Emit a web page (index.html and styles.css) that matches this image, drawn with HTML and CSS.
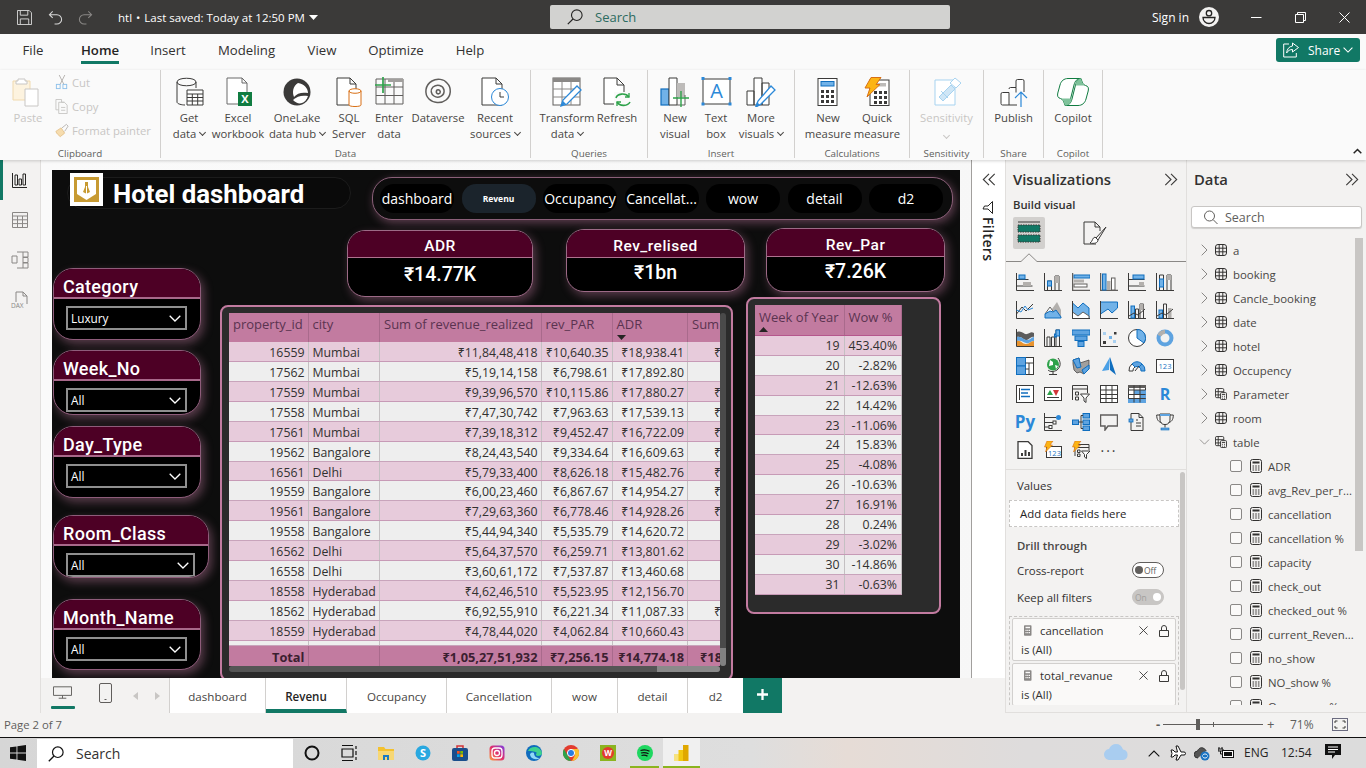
FILE: index.html
```html
<!DOCTYPE html>
<html lang="en">
<head>
<meta charset="utf-8">
<title>htl - Power BI Desktop</title>
<link rel="stylesheet" href="styles.css">
</head>
<body>
<svg class="defs" width="0" height="0">
  <symbol id="tb" viewBox="0 0 12 12"><rect x=".5" y=".5" width="11" height="11" rx="2.5" fill="none" stroke="#323130"/><path d="M4.2.5v11M7.8.5v11M.5 4.2h11M.5 7.8h11" stroke="#323130" fill="none"/></symbol>
  <symbol id="tc" viewBox="0 0 13 13"><rect x=".5" y=".5" width="9" height="10" rx="1.5" fill="none" stroke="#323130"/><path d="M3.5.5v10M.5 4h9M.5 7.5h9" stroke="#323130" fill="none"/><rect x="6" y="5" width="6.5" height="7.5" rx="1" fill="#f3f2f1" stroke="#323130"/><path d="M7.5 7h3.5M7.5 9h1M9.8 9h1M7.5 11h1M9.8 11h1" stroke="#323130"/></symbol>
  <symbol id="cl" viewBox="0 0 12 14"><rect x=".5" y=".5" width="11" height="13" rx="2" fill="none" stroke="#323130"/><rect x="2.5" y="2.5" width="7" height="2" fill="#323130"/><path d="M2.5 7h1.6M5.2 7h1.6M7.9 7h1.6M2.5 9h1.6M5.2 9h1.6M7.9 9h1.6M2.5 11h1.6M5.2 11h1.6M7.9 11h1.6" stroke="#323130" stroke-width="1.1"/></symbol>
  <symbol id="cv" viewBox="0 0 12 7"><path d="M.7.7 6 6l5.3-5.3" fill="none" stroke="#fff" stroke-width="1.3"/></symbol>
  <symbol id="dbl" viewBox="0 0 14 13"><path d="M7 .8 1.3 6.5 7 12.2M12.7.8 7 6.5l5.7 5.7" fill="none" stroke="#3b3a39" stroke-width="1.1"/></symbol>
  <symbol id="dbr" viewBox="0 0 14 13"><path d="M1.3.8 7 6.5 1.3 12.2M7 .8l5.7 5.7L7 12.2" fill="none" stroke="#3b3a39" stroke-width="1.1"/></symbol>
  <symbol id="ar" viewBox="0 0 7 12"><path d="M.7.7 6 6 .7 11.3" fill="none" stroke="#8a8886"/></symbol>
</svg>

<div class="app">
<header class="titlebar">
  <div class="tb-left">
    <svg class="ic15" viewBox="0 0 16 16"><path d="M.5.5h12.5l2.5 2.5v12.5H.5z M3.5.5v5h8v-5 M3.5 15.5v-6h9v6" fill="none" stroke="#d8d8d8"/></svg>
    <svg class="ic15" viewBox="0 0 16 16"><path d="M5 1.5 1.5 5 5 8.5M1.5 5h8a5 5 0 0 1 0 10H7" fill="none" stroke="#d8d8d8" stroke-width="1.1"/></svg>
    <svg class="ic15 dim" viewBox="0 0 16 16"><path d="M11 1.5 14.5 5 11 8.5M14.5 5h-8a5 5 0 0 0 0 10H9" fill="none" stroke="#8a8886" stroke-width="1.1"/></svg>
    <span class="doc-title">htl <b class="dot">•</b> Last saved: Today at 12:50 PM</span>
    <svg class="caret" viewBox="0 0 9 5"><path d="M0 0h9L4.5 5z" fill="#fff"/></svg>
  </div>
  <div class="global-search">
    <svg class="ic16" viewBox="0 0 16 16"><circle cx="9.8" cy="6.2" r="5.3" fill="none" stroke="#252423" stroke-width="1.1"/><path d="M6 10 .8 15.2" stroke="#252423" stroke-width="1.2"/></svg>
    <span>Search</span>
  </div>
  <div class="tb-right">
    <span class="signin">Sign in</span>
    <svg class="avatar" viewBox="0 0 20 20"><circle cx="10" cy="10" r="10" fill="#f3f2f1"/><circle cx="10" cy="6.2" r="2.7" fill="none" stroke="#252423" stroke-width="1.3"/><path d="M4 10.5h12a6 6 0 0 1-12 0z" fill="none" stroke="#252423" stroke-width="1.3"/></svg>
    <svg class="win-btn first" viewBox="0 0 11 11"><path d="M0 5.5h10.5" stroke="#fff"/></svg>
    <svg class="win-btn" viewBox="0 0 11 11"><path d="M.5 2.5h8v8h-8zM2.5 2.5V.5h8v8h-2" fill="none" stroke="#fff"/></svg>
    <svg class="win-btn" viewBox="0 0 11 11"><path d="M.5.5l10 10M10.5.5l-10 10" stroke="#fff"/></svg>
  </div>
</header>

<nav class="menu">
  <span>File</span><span class="active">Home</span><span>Insert</span><span>Modeling</span><span>View</span><span>Optimize</span><span>Help</span>
  <div class="share">
    <svg class="ic16" viewBox="0 0 16 16"><path d="M6 2H.7v13h12.6v-4" fill="none" stroke="#fff"/><path d="M9.5 1l6 4.5-6 4.5V7.5C7 7.5 5 8.6 3.6 11c.4-4 2.500-6.500 5.900-7z" fill="none" stroke="#fff"/></svg>
    <span>Share</span>
    <svg class="cv10" viewBox="0 0 12 7"><use href="#cv"/></svg>
  </div>
</nav>

<section class="ribbon">
  <div class="grp g-clip">
    <div class="clip-body">
      <div class="paste">
        <svg class="ic30" viewBox="0 0 30 30"><path d="M2 4h17v19H2z" fill="#fdf3df" stroke="#f0d9ae"/><path d="M7 4V2h7v2h2v3H5V4z" fill="#fff" stroke="#c8c6c4"/><path d="M14 12h13v17H14z" fill="#fff" stroke="#c8c6c4"/></svg>
        <span>Paste</span>
      </div>
      <div class="clip-list">
        <div><svg class="ic14" viewBox="0 0 14 16"><path d="M4 0l5 10M10 0 5 10" stroke="#b3b0ad" fill="none"/><rect x="1" y="10" width="4" height="4.500" fill="none" stroke="#8fc1ea"/><rect x="8" y="10" width="4" height="4.500" fill="none" stroke="#8fc1ea"/></svg><span>Cut</span></div>
        <div><svg class="ic14" viewBox="0 0 14 16"><path d="M.5.500h6v3h3M.5.500v11h3" fill="none" stroke="#c8c6c4"/><path d="M3.500 3.500h6l3 3v9h-9zM6 9h4.500M6 12h4.500" fill="none" stroke="#c8c6c4"/></svg><span>Copy</span></div>
        <div><svg class="ic14" viewBox="0 0 16 16"><path d="M1 9l6-4 4 6-5 4C4 13 2 12 1 9z" fill="#f6dcae" stroke="#e3c18a"/><path d="M8 5l5-4 2 2-4 6" fill="none" stroke="#b3b0ad"/></svg><span>Format painter</span></div>
      </div>
    </div>
    <div class="grp-name">Clipboard</div>
  </div>

  <div class="grp g-data">
    <div class="btns">
      <div class="btn w48"><svg class="ic30" viewBox="0 0 30 30"><path d="M3 5v20c0 2 5 3 8 3M3 5c0-5 19-5 19 0s-19 5-19 0M22 5v6" fill="none" stroke="#3b3a39"/><path d="M13 13h16v15H13zM13 17h16M18.300 17v11M23.700 17v11M13 20.500h16M13 24h16" fill="#fff" stroke="#3b3a39"/></svg><span>Get<br>data<i class="dn"></i></span></div>
      <div class="btn w50"><svg class="ic30" viewBox="0 0 30 30"><path d="M4 1h15l5 5v21H4zM19 1v5h5" fill="#fff" stroke="#6b6b6b"/><rect x="15" y="15" width="14" height="14" fill="#107c41"/><text x="22" y="26" class="xl">X</text></svg><span>Excel<br>workbook</span></div>
      <div class="btn w68"><svg class="ic30" viewBox="0 0 30 30"><circle cx="15" cy="15" r="13.500" fill="#3b3a39"/><path d="M16 6C11 9 10 15 12 20c3-4 8-5 14-4 0-5-4-9-10-10z" fill="#fff"/><path d="M11 23c4-4 9-5 15-4-1 3-3 6-6 7-3 1-6 0-9-3z" fill="#fff"/></svg><span>OneLake<br>data hub<i class="dn"></i></span></div>
      <div class="btn w36"><svg class="ic30" viewBox="0 0 30 30"><path d="M3 1h13l6 6v21H3zM16 1v6h6" fill="#fff" stroke="#3b3a39"/><path d="M15 14c0-3 12-3 12 0v14c0 2-12 2-12 0z" fill="#fff" stroke="#d86f14"/><path d="M15 14c0 3 12 3 12 0" fill="none" stroke="#d86f14"/></svg><span>SQL<br>Server</span></div>
      <div class="btn w44"><svg class="ic30" viewBox="0 0 30 30"><path d="M2 2h27v25H2zM2 10h27M2 18.500h27M11 2v25M20 2v25" fill="none" stroke="#605e5c"/><rect x="14" y="2" width="15" height="3" fill="#a19f9d"/><path d="M9 0v16M1 8h16" stroke="#2ea24a" stroke-width="1.700"/></svg><span>Enter<br>data</span></div>
      <div class="btn w54"><svg class="ic30" viewBox="0 0 30 30"><path d="M9 4c5-3 12-2 15 2 5 5 4 13-1 17-5 4-13 3-17-1-5-5-4-14 3-18z M10 10c4-3 10-2 11 3 1 6-6 9-10 6-3-2-4-6-1-9z M14 13c2-1 4 1 3 3-2 2-5 0-3-3z" fill="none" stroke="#605e5c" stroke-width="1.500"/></svg><span>Dataverse</span></div>
      <div class="btn w60"><svg class="ic30" viewBox="0 0 30 30"><path d="M2 1h14l6 6v21H2zM16 1v6h6" fill="#fff" stroke="#3b3a39"/><circle cx="20" cy="20" r="8.500" fill="#fff" stroke="#2b88d8"/><path d="M20 15v5h4" fill="none" stroke="#3b3a39"/></svg><span>Recent<br>sources<i class="dn"></i></span></div>
    </div>
    <div class="grp-name">Data</div>
  </div>

  <div class="grp g-query">
    <div class="btns">
      <div class="btn w60"><svg class="ic30" viewBox="0 0 30 30"><rect x="1" y="1" width="27" height="27" fill="#fff" stroke="#605e5c"/><rect x="1" y="1" width="27" height="4" fill="#8a8886"/><path d="M1 12h27M1 20h27M10 5v23M19 5v23" stroke="#8a8886" fill="none"/><path d="M9 29l2-6L25 9l4 4-14 14z" fill="#fff" stroke="#2b88d8" stroke-width="1.300"/><path d="M9 29l2-5 3 3z" fill="#2b88d8"/></svg><span>Transform<br>data<i class="dn"></i></span></div>
      <div class="btn w40"><svg class="ic30" viewBox="0 0 30 30"><path d="M2 1h13l7 7v19H2zM15 1v7h7" fill="#fff" stroke="#3b3a39"/><rect x="12" y="15" width="18" height="15" fill="#fafafa"/><path d="M14 21c1-4 9-6 13-1M28 25c-2 4-10 5-13 0" fill="none" stroke="#2ea24a" stroke-width="1.600"/><path d="M27 16v4h-4M15 29v-4h4" fill="none" stroke="#2ea24a" stroke-width="1.300"/></svg><span>Refresh</span></div>
    </div>
    <div class="grp-name">Queries</div>
  </div>

  <div class="grp g-insert">
    <div class="btns">
      <div class="btn w40"><svg class="ic30" viewBox="0 0 30 30"><rect x="1" y="12" width="8" height="16" fill="#71b2e8" stroke="#106ebe" stroke-width="1.200"/><path d="M9 1h8v27H9z" fill="#fff" stroke="#3b3a39"/><rect x="17" y="6" width="8" height="14" fill="#bdbbb9"/><path d="M25 18v10h-8" fill="none" stroke="#605e5c"/><path d="M21 16v16M13 23h16" stroke="#2ea24a" stroke-width="1.400" transform="translate(0 -2)"/></svg><span>New<br>visual</span></div>
      <div class="btn w42"><svg class="ic30 wide" viewBox="0 0 30 30"><rect x="1.500" y="2" width="27" height="25" fill="#fff" stroke="#3b3a39"/><path d="M0 0h3v3H0zM27 0h3v3h-3zM0 25.500h3v3H0zM27 25.500h3v3h-3z" fill="#2b88d8"/><text x="15" y="21" class="tA">A</text></svg><span>Text<br>box</span></div>
      <div class="btn w48"><svg class="ic30" viewBox="0 0 30 30"><path d="M1 14h7v14H1zM8 1h8v27H8zM16 6h7v22h-7z" fill="#fff" stroke="#3b3a39"/><path d="M10 30l2-6L25 9l4 4-14 14z" fill="#fff" stroke="#2b88d8" stroke-width="1.300"/><path d="M9 30l2-5 3 3z" fill="#2b88d8"/></svg><span>More<br>visuals<i class="dn"></i></span></div>
    </div>
    <div class="grp-name">Insert</div>
  </div>

  <div class="grp g-calc">
    <div class="btns">
      <div class="btn w50"><svg class="ic30" viewBox="0 0 30 30"><rect x="5" y="1.500" width="19" height="27" fill="#fff" stroke="#3b3a39"/><rect x="8" y="4.500" width="13" height="4.500" fill="#71b2e8" stroke="#106ebe"/><path d="M8 13h3v3H8zM13 13h3v3h-3zM18 13h3v3h-3zM8 18h3v3H8zM13 18h3v3h-3zM18 18h3v3h-3zM8 23h3v3H8zM13 23h3v3h-3zM18 23h3v3h-3z" fill="#3b3a39"/></svg><span>New<br>measure</span></div>
      <div class="btn w48"><svg class="ic30" viewBox="0 0 30 30"><rect x="8" y="3" width="19" height="25.500" fill="#fff" stroke="#3b3a39"/><rect x="13" y="6" width="11" height="3.500" fill="#bdbbb9"/><path d="M12 14h3v3h-3zM17 14h3v3h-3zM22 14h3v3h-3zM12 19h3v3h-3zM17 19h3v3h-3zM22 19h3v3h-3zM12 24h3v3h-3zM17 24h3v3h-3zM22 24h3v3h-3z" fill="#3b3a39"/><path d="M9 .500h10l-5 7h4L5 20l3-9H3z" fill="#fcb414" stroke="#d86f14"/></svg><span>Quick<br>measure</span></div>
    </div>
    <div class="grp-name">Calculations</div>
  </div>

  <div class="grp g-sens">
    <div class="btns">
      <div class="btn w73 off"><svg class="ic30" viewBox="0 0 30 30"><path d="M3 3h20v25H3z" fill="#fff" stroke="#a7d3f0"/><path d="M7 20 19 8l4 4-12 12zM9 14l7 7" fill="#cfe6f6" stroke="#a7d3f0"/><path d="M18 6l5-5 6 5-5 5z" fill="#fff" stroke="#a7d3f0"/></svg><span>Sensitivity<br><i class="dn solo"></i></span></div>
    </div>
    <div class="grp-name">Sensitivity</div>
  </div>

  <div class="grp g-share">
    <div class="btns">
      <div class="btn w59"><svg class="ic30" viewBox="0 0 30 30"><path d="M2 17a1.500 1.500 0 0 1 1.500-1.500H10V28H3.500A1.500 1.500 0 0 1 2 26.500z M10 12a1.500 1.500 0 0 1 1.500-1.500H17v5M17 10.500V4a1.500 1.500 0 0 1 1.500-1.500h5A1.500 1.500 0 0 1 25 4v11M10 28h8" fill="#fff" stroke="#3b3a39"/><path d="M22 31V15M16 21l6-6 6 6" fill="none" stroke="#2b88d8" stroke-width="1.200"/></svg><span>Publish</span></div>
    </div>
    <div class="grp-name">Share</div>
  </div>

  <div class="grp g-copilot">
    <div class="btns">
      <div class="btn w58"><svg class="cop" viewBox="0 0 32 28"><path d="M11 .5H24C20 .5 18 3 17 7L13.500 21C12.500 25 10.500 27.500 8 27.500 7 24 6 21 3.500 20.500 1 20 0 18 .8 15L3 7C4 3 7 .5 11 .5z" fill="#fff" stroke="#107c41"/><path d="M21 27.500H8C12 27.500 14 25 15 21L18.500 7C19.500 3 21.500 .5 24 .5 25 4 26 7 28.500 7.500 31 8 32 10 31.200 13L29 21C28 25 25 27.500 21 27.500z" fill="#fff" stroke="#107c41"/><path d="M24 .5C25 4 26 7 28.500 7.500H18.500C19.500 3 21.500 .5 24 .5z" fill="#7fc29b"/><path d="M8 27.500C7 24 6 21 3.500 20.500H14.500C14 25 12 27.500 8 27.500z" fill="#7fc29b"/></svg><span>Copilot</span></div>
    </div>
    <div class="grp-name">Copilot</div>
  </div>
  <svg class="collapse" viewBox="0 0 9 6"><path d="M.7 5.300 4.500 1.500l3.800 3.800" fill="none" stroke="#252423" stroke-width="1.500"/></svg>
</section>

<main class="main">
  <aside class="rail">
    <div class="rail-item sel"><svg class="ic16" viewBox="0 0 16 16"><path d="M.5 1v14.500H15M3 3h2.500v10H3zM7 7h2.500v6H7zM11 2h2.500v11H11z" fill="none" stroke="#252423"/></svg></div>
    <div class="rail-item"><svg class="ic16" viewBox="0 0 16 16"><path d="M.5.500h15v15H.5zM.5 4h15M.5 7.800h15M.5 11.600h15M5.500 4v11.500M10.500 4v11.500" fill="none" stroke="#8a8886"/></svg></div>
    <div class="rail-item"><svg class="ic18" viewBox="0 0 18 18"><path d="M6 1h6v16H6M12 1h5v5h-5M12 12h5v5h-5M12 6.500h5v5h-5M1 5h5v7H1z" fill="none" stroke="#8a8886"/></svg></div>
    <div class="rail-item"><svg class="ic18" viewBox="0 0 18 18"><path d="M5 11V1h7l4 4v8M12 1v4h4" fill="none" stroke="#8a8886"/><text x="0" y="17" class="dax">DAX</text></svg></div>
  </aside>

  <div class="center">
    <div class="stage">
      <div class="canvas">
        <div class="title-plate"></div>
        <div class="logo"><svg viewBox="0 0 25 25"><rect width="25" height="25" fill="#c79a32"/><path d="M3 3h19v14l-9.500 6L3 17z" fill="#fff"/><path d="M11 5h3v5l2 5-3 1.500V9h-1v7.500L9 15l2-5z" fill="#c79a32"/></svg></div>
        <div class="page-title">Hotel dashboard</div>

        <div class="navbar">
          <span class="nav">dashboard</span><span class="nav cur">Revenu</span><span class="nav">Occupancy</span><span class="nav">Cancellat...</span><span class="nav">wow</span><span class="nav">detail</span><span class="nav">d2</span>
        </div>

        <div class="kpi k-adr"><div class="kpi-head">ADR</div><div class="kpi-val">₹14.77K</div></div>
        <div class="kpi k-rel"><div class="kpi-head">Rev_relised</div><div class="kpi-val">₹1bn</div></div>
        <div class="kpi k-par"><div class="kpi-head">Rev_Par</div><div class="kpi-val">₹7.26K</div></div>

        <div class="slicer s-cat"><div class="sl-head">Category</div><div class="dd"><span>Luxury</span><svg viewBox="0 0 12 7"><use href="#cv"/></svg></div></div>
        <div class="slicer s-week"><div class="sl-head">Week_No</div><div class="dd"><span>All</span><svg viewBox="0 0 12 7"><use href="#cv"/></svg></div></div>
        <div class="slicer s-day"><div class="sl-head">Day_Type</div><div class="dd"><span>All</span><svg viewBox="0 0 12 7"><use href="#cv"/></svg></div></div>
        <div class="slicer s-room"><div class="sl-head">Room_Class</div><div class="dd"><span>All</span><svg viewBox="0 0 12 7"><use href="#cv"/></svg></div></div>
        <div class="slicer s-month"><div class="sl-head">Month_Name</div><div class="dd"><span>All</span><svg viewBox="0 0 12 7"><use href="#cv"/></svg></div></div>

        <div class="frame f-main">
          <div class="grid-clip">
            <div class="r hd"><div>property_id</div><div>city</div><div>Sum of revenue_realized</div><div>rev_PAR</div><div>ADR<svg class="sort" viewBox="0 0 9 5"><path d="M0 0h9L4.500 5z" fill="#252423"/></svg></div><div>Sum of</div></div>
            <div class="r"><div class="n">16559</div><div>Mumbai</div><div class="n">₹11,84,48,418</div><div class="n">₹10,640.35</div><div class="n">₹18,938.41</div><div class="x">₹</div></div>
            <div class="r"><div class="n">17562</div><div>Mumbai</div><div class="n">₹5,19,14,158</div><div class="n">₹6,798.61</div><div class="n">₹17,892.80</div><div class="x"></div></div>
            <div class="r"><div class="n">17559</div><div>Mumbai</div><div class="n">₹9,39,96,570</div><div class="n">₹10,115.86</div><div class="n">₹17,880.27</div><div class="x">₹</div></div>
            <div class="r"><div class="n">17558</div><div>Mumbai</div><div class="n">₹7,47,30,742</div><div class="n">₹7,963.63</div><div class="n">₹17,539.13</div><div class="x">₹</div></div>
            <div class="r"><div class="n">17561</div><div>Mumbai</div><div class="n">₹7,39,18,312</div><div class="n">₹9,452.47</div><div class="n">₹16,722.09</div><div class="x">₹</div></div>
            <div class="r"><div class="n">19562</div><div>Bangalore</div><div class="n">₹8,24,43,540</div><div class="n">₹9,334.64</div><div class="n">₹16,609.63</div><div class="x">₹</div></div>
            <div class="r"><div class="n">16561</div><div>Delhi</div><div class="n">₹5,79,33,400</div><div class="n">₹8,626.18</div><div class="n">₹15,482.76</div><div class="x">₹</div></div>
            <div class="r"><div class="n">19559</div><div>Bangalore</div><div class="n">₹6,00,23,460</div><div class="n">₹6,867.67</div><div class="n">₹14,954.27</div><div class="x">₹</div></div>
            <div class="r"><div class="n">19561</div><div>Bangalore</div><div class="n">₹7,29,63,360</div><div class="n">₹6,778.46</div><div class="n">₹14,928.26</div><div class="x">₹</div></div>
            <div class="r"><div class="n">19558</div><div>Bangalore</div><div class="n">₹5,44,94,340</div><div class="n">₹5,535.79</div><div class="n">₹14,620.72</div><div class="x"></div></div>
            <div class="r"><div class="n">16562</div><div>Delhi</div><div class="n">₹5,64,37,570</div><div class="n">₹6,259.71</div><div class="n">₹13,801.62</div><div class="x"></div></div>
            <div class="r"><div class="n">16558</div><div>Delhi</div><div class="n">₹3,60,61,172</div><div class="n">₹7,537.87</div><div class="n">₹13,460.68</div><div class="x"></div></div>
            <div class="r"><div class="n">18558</div><div>Hyderabad</div><div class="n">₹4,62,46,510</div><div class="n">₹5,523.95</div><div class="n">₹12,156.70</div><div class="x"></div></div>
            <div class="r"><div class="n">18562</div><div>Hyderabad</div><div class="n">₹6,92,55,910</div><div class="n">₹6,221.34</div><div class="n">₹11,087.33</div><div class="x">₹</div></div>
            <div class="r"><div class="n">18559</div><div>Hyderabad</div><div class="n">₹4,78,44,020</div><div class="n">₹4,062.84</div><div class="n">₹10,660.43</div><div class="x"></div></div>
            <div class="r stub"><div></div><div></div><div></div><div></div><div></div><div></div></div>
            <div class="r tot"><div class="n">Total</div><div></div><div class="n">₹1,05,27,51,932</div><div class="n">₹7,256.15</div><div class="n">₹14,774.18</div><div class="x2">₹18</div></div>
          </div>
          <div class="vbar"><i></i></div>
          <div class="hbar"><i></i></div>
        </div>

        <div class="frame f-wow">
          <div class="wow-grid">
            <div class="w hd"><div>Week of Year<svg class="sort up" viewBox="0 0 9 5"><path d="M0 5h9L4.500 0z" fill="#252423"/></svg></div><div>Wow %</div></div>
            <div class="w"><div class="n">19</div><div class="n">453.40%</div></div>
            <div class="w"><div class="n">20</div><div class="n">-2.82%</div></div>
            <div class="w"><div class="n">21</div><div class="n">-12.63%</div></div>
            <div class="w"><div class="n">22</div><div class="n">14.42%</div></div>
            <div class="w"><div class="n">23</div><div class="n">-11.06%</div></div>
            <div class="w"><div class="n">24</div><div class="n">15.83%</div></div>
            <div class="w"><div class="n">25</div><div class="n">-4.08%</div></div>
            <div class="w"><div class="n">26</div><div class="n">-10.63%</div></div>
            <div class="w"><div class="n">27</div><div class="n">16.91%</div></div>
            <div class="w"><div class="n">28</div><div class="n">0.24%</div></div>
            <div class="w"><div class="n">29</div><div class="n">-3.02%</div></div>
            <div class="w"><div class="n">30</div><div class="n">-14.86%</div></div>
            <div class="w"><div class="n">31</div><div class="n">-0.63%</div></div>
          </div>
        </div>
      </div>
      <div class="filters">
        <svg class="dbl" viewBox="0 0 14 13"><use href="#dbl"/></svg>
        <svg class="funnel" viewBox="0 0 13 13"><path d="M.5 2.500h12L8 7v5L5 10.500V7z" fill="none" stroke="#252423" transform="rotate(90 6.500 6.500)"/></svg>
        <div class="filters-label">Filters</div>
      </div>
    </div>

    <div class="pagebar">
      <div class="view-btn on"><svg class="desk" viewBox="0 0 20 14"><path d="M.5.500h19v9H.5zM10 9.500v3M6 12.500h8" fill="none" stroke="#605e5c"/></svg></div>
      <div class="view-btn phone"><svg class="mob" viewBox="0 0 13 20"><rect x=".5" y=".5" width="12" height="19" rx="1.500" fill="none" stroke="#605e5c"/><path d="M5.500 16.500h2" stroke="#605e5c"/></svg></div>
      <div class="pager"><svg viewBox="0 0 5 8"><path d="M5 0v8L0 4z" fill="#c8c6c4"/></svg><svg viewBox="0 0 5 8"><path d="M0 0v8l5-4z" fill="#c8c6c4"/></svg></div>
      <div class="ptab t1">dashboard</div><div class="ptab t2 sel">Revenu</div><div class="ptab t3">Occupancy</div><div class="ptab t4">Cancellation</div><div class="ptab t5">wow</div><div class="ptab t6">detail</div><div class="ptab t7">d2</div>
      <div class="padd"><svg viewBox="0 0 12 12"><path d="M6 0v12M0 6h12" stroke="#fff" stroke-width="2.500"/></svg></div>
    </div>
  </div>

  <aside class="viz">
    <div class="pane-head"><h2>Visualizations</h2><svg viewBox="0 0 14 13"><use href="#dbr"/></svg></div>
    <div class="build-label">Build visual</div>
    <div class="build-tabs">
      <div class="tile"><svg viewBox="0 0 24 24"><path d="M1 1h22" stroke="#3b3a39"/><rect x="1" y="4" width="22" height="7" fill="#117865" stroke="#3b3a39" stroke-dasharray="1.500 1"/><rect x="1" y="14" width="22" height="7" fill="#117865" stroke="#3b3a39" stroke-dasharray="1.500 1"/></svg></div>
      <svg class="fmt" viewBox="0 0 24 24"><path d="M13 23H1V1h11l5 5v4M12 1v5h5" fill="none" stroke="#3b3a39"/><path d="M23 6 13 17l2 2z" fill="none" stroke="#3b3a39"/><path d="M12 16c-3 1-2 4-5 6 4 1 8 0 8-3z" fill="#fff" stroke="#3b3a39"/></svg>
    </div>
    <div class="divider"><svg class="notch" viewBox="0 0 18 9"><path d="M0 9 9 .5 18 9z" fill="#f3f2f1"/><path d="M0 8.500h1L9 .8l8 7.700h1" fill="none" stroke="#8a8886"/></svg></div>
    <div class="viz-grid">
      <svg viewBox="0 0 18 18"><path class="k" d="M.5 0v17.500H18M.5 6.500h12M.5 13h16"/><rect class="bl" x="3" y="2" width="6" height="4"/><rect class="gr" x="7" y="9" width="8" height="4"/></svg>
      <svg viewBox="0 0 18 18"><path class="k" d="M.5 0v17.500H18"/><path class="k" d="M3.500 8h4v9.500h-4zM11 3h4v14.500h-4z"/><rect class="bl" x="3.500" y="8" width="4" height="5"/><rect class="gr" x="11" y="3" width="4" height="7"/></svg>
      <svg viewBox="0 0 18 18"><path class="k2" d="M.5 0v17.500H18"/><rect class="bl" x="2" y="2" width="16" height="3"/><rect class="gr" x="2" y="6.500" width="10" height="3"/><rect class="wh" x="2" y="11" width="13" height="3"/></svg>
      <svg viewBox="0 0 18 18"><path class="k2" d="M.5 0v17.500H18"/><rect class="bl" x="2.500" y="1" width="3.500" height="16"/><rect class="gr" x="7" y="8" width="3.500" height="9"/><rect class="wh" x="11.500" y="5" width="3.500" height="12"/></svg>
      <svg viewBox="0 0 18 18"><path class="k" d="M.5 0v17.500H18M.5 6.500h16M.5 13h16"/><rect class="bl" x="5" y="2" width="11" height="4"/><rect class="gr" x="11" y="9" width="5" height="4"/></svg>
      <svg viewBox="0 0 18 18"><path class="k" d="M.5 0v17.500H18M3.500 2h4v15.500h-4zM11 2h4v15.500h-4z"/><rect class="bl" x="3.500" y="6" width="4" height="8"/><rect class="gr" x="11" y="2" width="4" height="5"/></svg>

      <svg viewBox="0 0 18 18"><path class="k" d="M.5 0v17.500H18M.5 13 6 6l4 4 7-7"/><path class="lb" d="M.5 9 5 11l4-6 3 4 5-2"/></svg>
      <svg viewBox="0 0 18 18"><path class="gr" d="M8 8l5-7 4 8v8h-7z"/><path class="wh" d="M1 13l5-7 5 7z"/><path class="bl" d="M1 17v-4l5-3 3 1 3-2 5 7v1z"/></svg>
      <svg viewBox="0 0 18 18"><path class="bl" d="M.5 2 6 7l5-5 6 5v10.500H.5z"/><path class="wh" d="M.5 11 6 15l5-4 6 4v2.500H.5z"/><path class="k" d="M.5 0v17.500H18"/></svg>
      <svg viewBox="0 0 18 18"><path class="bl" d="M.5 1h17v6L12 12 8 8l-7.500 5z"/><path class="k" d="M.5 0v17.500H18"/></svg>
      <svg viewBox="0 0 18 18"><path class="k" d="M.5 0v17.500H18"/><rect class="bl" x="3" y="5" width="3.500" height="12"/><path class="k" d="M7.500 8h3v9.500h-3zM12 3h3.500v14.500H12z"/><rect class="gr" x="12" y="3" width="3.500" height="6"/><path class="k" d="M1 15l5-3 4 2 7-6"/></svg>
      <svg viewBox="0 0 18 18"><path class="k" d="M.5 0v17.500H18"/><rect class="bl" x="3" y="9" width="3.500" height="8"/><path class="k" d="M7.500 3h3v14.500h-3z"/><rect class="gr" x="12" y="7" width="3.500" height="10"/><path class="k" d="M1 15l5-3 4 2 7-6"/></svg>

      <svg viewBox="0 0 18 18"><path class="k" d="M.5 0v17.500H18"/><path d="M1 3c5-2 7 3 10 2s4-3 7-1v4c-3-1-4 2-7 3S6 7 1 8z" fill="#5c5c5c"/><path d="M1 8c5-1 6 3 10 3s4-3 7-3v4c-3 0-4 3-8 2S6 11 1 12z" fill="#5ea3e0"/><path d="M1 12c4-1 5 3 9 3s4-3 8-3v5H1z" fill="#e8932f"/></svg>
      <svg viewBox="0 0 18 18"><path class="k" d="M.5 0v17.500H18M3 17.500V8h3v9.500M7.500 17.500V8h3v9.500M12 17.500V1h3.500v16.500"/><rect class="bl" x="10.500" y="5" width="2" height="3"/><rect class="bl" x="12" y="1" width="3.500" height="6"/></svg>
      <svg viewBox="0 0 18 18"><rect class="bl2" x="0" y="1" width="18" height="5"/><rect class="bl2" x="3" y="7" width="12" height="4.500"/><rect class="bl2" x="6" y="12.500" width="6" height="5"/></svg>
      <svg viewBox="0 0 18 18"><path class="k" d="M.5 0v17.500H18"/><rect x="3" y="3" width="3" height="3" fill="#a9d0f0"/><rect x="9" y="7" width="3" height="3" fill="#71b2e8"/><rect x="14" y="3" width="2.500" height="2.500" fill="#3b3a39"/><rect x="3" y="12" width="3" height="3" fill="#3b3a39"/><rect x="13" y="11" width="3" height="3" fill="#a9d0f0"/></svg>
      <svg viewBox="0 0 18 18"><circle cx="9" cy="9" r="8.500" fill="#fff" stroke="#3b3a39"/><path class="bl" d="M9 .5A8.500 8.500 0 0 1 16 14L9 9z"/></svg>
      <svg viewBox="0 0 18 18"><circle cx="9" cy="9" r="6.500" fill="none" stroke="#5ea3e0" stroke-width="4"/><path d="M1.500 6A8 8 0 0 1 9 1v4a4 4 0 0 0-3.500 2.300z" fill="#b3b0ad"/></svg>

      <svg viewBox="0 0 18 18"><rect x=".5" y=".5" width="17" height="17" fill="#fff" stroke="#3b3a39"/><rect x=".5" y=".5" width="9" height="8.500" fill="#5ea3e0" stroke="#106ebe"/><rect x=".5" y="9" width="9" height="8.500" fill="#5ea3e0" stroke="#106ebe"/><path class="k" d="M9.500 6h8M13 6v11.500M9.500 12h3.500"/></svg>
      <svg viewBox="0 0 18 18"><circle cx="9" cy="7.500" r="6" fill="#2ea24a"/><path d="M6 3l3 2v3l-4 1zM11 8l3 1-2 3z" fill="#fff"/><path class="k" d="M14 1c3 4 3 9-1 12-3 2-7 2-9 0M9 14v3M5 17.500h8"/></svg>
      <svg viewBox="0 0 18 18"><path d="M1 3l6-2 1 5 9-3v9l-5 5-4-2-3 1-3-3-1-6z" fill="#a19f9d" stroke="#3b3a39" stroke-width=".700"/><path class="bl2" d="M1 3l6-2 1 5 1 4-4 1zM17 8v4l-5 5-2-4z"/></svg>
      <svg viewBox="0 0 18 18"><path d="M10 0 2 14l7-1z" fill="#4aa0e6"/><path d="M10 0v13l6 5z" fill="#106ebe"/></svg>
      <svg viewBox="0 0 18 18"><path d="M1 14a8 8 0 0 1 3-7l3 3a4 4 0 0 0-2 4z" fill="#fff" stroke="#3b3a39"/><path d="M4 7c3-3 7-3 10 0l-3 3a4 4 0 0 0-4 0z" fill="#5ea3e0" stroke="#106ebe"/><path d="M14 7a8 8 0 0 1 3 7h-4a4 4 0 0 0-2-4z" fill="#5ea3e0" stroke="#106ebe"/><path d="M7 14l4-5" stroke="#3b3a39"/></svg>
      <svg viewBox="0 0 18 18"><rect x=".5" y="2.500" width="17" height="13" fill="#fff" stroke="#3b3a39"/><text x="9" y="12" class="t123">123</text></svg>

      <svg viewBox="0 0 18 18"><rect x=".5" y=".5" width="17" height="17" fill="#fff" stroke="#3b3a39"/><path class="k" d="M3.500 3v12"/><path d="M5 4.500h9M5 8h7M5 11.500h9" stroke="#106ebe" stroke-width="1.500"/></svg>
      <svg viewBox="0 0 18 18"><rect x=".5" y="2.500" width="17" height="13" fill="#fff" stroke="#3b3a39"/><path d="M3 10l3-5 3 5z" fill="#2ea24a"/><path d="M9 5h6l-3 6z" fill="#d13438"/><path class="k" d="M3 12.500h12"/></svg>
      <svg viewBox="0 0 18 18"><path class="k" d="M.5 15V.5h15V8M.5 4h15M3.500 7h3v3h-3zM3.500 12h3v3h-3z"/><path d="M8.500 9h9L14 13v4.500L12 16v-3z" fill="#fff" stroke="#3b3a39"/></svg>
      <svg viewBox="0 0 18 18"><rect x=".5" y=".5" width="17" height="17" fill="#fff" stroke="#3b3a39"/><path class="k" d="M.5 5h17M.5 9.500h17M.5 13.500h17M6 .5v17M12 .5v17"/></svg>
      <svg viewBox="0 0 18 18"><rect x=".5" y=".5" width="17" height="17" fill="#fff" stroke="#3b3a39"/><rect x="0" y="0" width="18" height="3" fill="#605e5c"/><rect x="6" y="5" width="12" height="4" fill="#5ea3e0"/><rect x="12" y="9" width="6" height="4" fill="#5ea3e0"/><rect x="0" y="13.500" width="18" height="4.500" fill="#5ea3e0"/><path class="k" d="M6 .5v17M12 .5v17M.5 5h17M.5 9.500h17M.5 13.500h17"/></svg>
      <span class="tR">R</span>

      <span class="tPy">Py</span>
      <svg viewBox="0 0 18 18"><path class="k" d="M.5 0v17.500H18M.5 4.500H12M.5 9.500H9M.5 14H6"/><circle cx="14.500" cy="4.500" r="2.500" fill="#2b88d8"/><rect x="9" y="8" width="3" height="3" fill="#fff" stroke="#3b3a39"/><rect x="5" y="12.500" width="3" height="3" fill="#fff" stroke="#3b3a39"/></svg>
      <svg viewBox="0 0 18 18"><rect class="bl2" x=".5" y="7" width="6" height="4.500"/><rect class="bl2" x="11" y=".5" width="6.500" height="4.500"/><rect class="bl2" x="11" y="7" width="6.500" height="4.500"/><rect class="bl2" x="11" y="13" width="6.500" height="4.500"/><path class="k" d="M6.500 9H11M9 2.500V15.500M9 2.500h2M9 15.500h2"/></svg>
      <svg viewBox="0 0 18 18"><path class="k2" d="M.5 2h17v11H8l-3 4v-4H.5z"/></svg>
      <svg viewBox="0 0 18 18"><path class="k" d="M3 .5h8l4 4v13H3zM11 .5v4h4M8 10h5M8 13h5M8 7h2"/><rect x="1" y="6" width="4" height="3" fill="#5ea3e0" stroke="#106ebe" stroke-width=".800"/></svg>
      <svg viewBox="0 0 18 18"><path class="k" d="M4 2H.7c0 5 2 7 4.800 7.500M14 2h3.300c0 5-2 7-4.800 7.500M4 1v5c0 4 2 5.500 5 5.500s5-1.500 5-5.500V1zM9 11.500v3"/><rect x="4" y="1" width="10" height="2" fill="#5ea3e0"/><rect x="5" y="15" width="8" height="2" fill="#5ea3e0" stroke="#106ebe" stroke-width=".600"/></svg>

      <svg viewBox="0 0 18 18"><path d="M2 .5h10l4 4v13H2z" fill="#fff" stroke="#3b3a39" stroke-width="1.300"/><path d="M5 15v-3h2v3zM8.500 15V9h2v6zM12 15v-4h2v4z" fill="#3b3a39"/></svg>
      <svg viewBox="0 0 18 18"><rect x="2.500" y="5.500" width="15" height="11" fill="#fff" stroke="#3b3a39"/><text x="10.500" y="14.500" class="t123">123</text><path d="M3 0h6L6 4h2.500L1.500 11 3 6H.5z" fill="#fcb414" stroke="#d86f14" stroke-width=".600"/></svg>
      <svg viewBox="0 0 18 18"><path class="k" d="M3 15V3.500h14V9M3 6.500h14M5.500 9h2.500v2.500H5.500zM5.500 13h2.500v2.500H5.500z"/><path d="M9.500 10h8.500l-3.500 3.500v4L12.500 16v-2.500z" fill="#fff" stroke="#3b3a39"/><path d="M3 0h6L6 4h2.500L1.500 11 3 6H.5z" fill="#fcb414" stroke="#d86f14" stroke-width=".600"/></svg>
      <span class="more">...</span>
    </div>
    <div class="wells">
      <div class="well-label">Values</div>
      <div class="dropzone">Add data fields here</div>
      <div class="drill">Drill through</div>
      <div class="opt o1"><span>Cross-report</span><div class="toggle"><i></i><em>Off</em></div></div>
      <div class="opt o2"><span>Keep all filters</span><div class="toggle on"><em>On</em><i></i></div></div>
      <div class="chips">
        <div class="chip"><div class="chip-top"><svg class="cic" viewBox="0 0 12 14"><path fill-rule="evenodd" d="M1 0h8a1 1 0 0 1 1 1v12a1 1 0 0 1-1 1H1a1 1 0 0 1-1-1V1a1 1 0 0 1 1-1zM2 2v2h6V2zM2 6v1.500h1.500V6zM4.300 6v1.500h1.500V6zM6.500 6v1.500H8V6zM2 9v1.500h1.500V9zM4.300 9v1.500h1.500V9zM6.500 9v1.500H8V9z" fill="#8a8886"/></svg><span>cancellation</span><svg class="xx" viewBox="0 0 10 10"><path d="M.5.500l9 9M9.500.5l-9 9" stroke="#3b3a39"/></svg><svg class="lock" viewBox="0 0 10 12"><path d="M.5 5.500h9v6h-9zM2.500 5.500V3a2.500 2.500 0 0 1 5 0v2.500" fill="none" stroke="#3b3a39"/></svg></div><div class="chip-sub">is (All)</div></div>
        <div class="chip"><div class="chip-top"><svg class="cic" viewBox="0 0 12 14"><path fill-rule="evenodd" d="M1 0h8a1 1 0 0 1 1 1v12a1 1 0 0 1-1 1H1a1 1 0 0 1-1-1V1a1 1 0 0 1 1-1zM2 2v2h6V2zM2 6v1.500h1.500V6zM4.300 6v1.500h1.500V6zM6.500 6v1.500H8V6zM2 9v1.500h1.500V9zM4.300 9v1.500h1.500V9zM6.500 9v1.500H8V9z" fill="#8a8886"/></svg><span>total_revanue</span><svg class="xx" viewBox="0 0 10 10"><path d="M.5.500l9 9M9.500.5l-9 9" stroke="#3b3a39"/></svg><svg class="lock" viewBox="0 0 10 12"><path d="M.5 5.500h9v6h-9zM2.500 5.500V3a2.500 2.500 0 0 1 5 0v2.500" fill="none" stroke="#3b3a39"/></svg></div><div class="chip-sub">is (All)</div></div>
      </div>
      <div class="well-scroll"></div>
    </div>
  </aside>

  <aside class="data">
    <div class="pane-head"><h2>Data</h2><svg viewBox="0 0 14 13"><use href="#dbr"/></svg></div>
    <div class="data-search"><svg class="ic14" viewBox="0 0 14 14"><circle cx="5.500" cy="5.500" r="5" fill="none" stroke="#605e5c"/><path d="M9 9l4.500 4.500" stroke="#605e5c"/></svg><span>Search</span></div>
    <div class="tree">
      <div class="node"><svg class="ar" viewBox="0 0 7 12"><use href="#ar"/></svg><svg class="nic" viewBox="0 0 12 12"><use href="#tb"/></svg><span>a</span></div>
      <div class="node"><svg class="ar" viewBox="0 0 7 12"><use href="#ar"/></svg><svg class="nic" viewBox="0 0 12 12"><use href="#tb"/></svg><span>booking</span></div>
      <div class="node"><svg class="ar" viewBox="0 0 7 12"><use href="#ar"/></svg><svg class="nic" viewBox="0 0 12 12"><use href="#tb"/></svg><span>Cancle_booking</span></div>
      <div class="node"><svg class="ar" viewBox="0 0 7 12"><use href="#ar"/></svg><svg class="nic" viewBox="0 0 12 12"><use href="#tb"/></svg><span>date</span></div>
      <div class="node"><svg class="ar" viewBox="0 0 7 12"><use href="#ar"/></svg><svg class="nic" viewBox="0 0 12 12"><use href="#tb"/></svg><span>hotel</span></div>
      <div class="node"><svg class="ar" viewBox="0 0 7 12"><use href="#ar"/></svg><svg class="nic" viewBox="0 0 12 12"><use href="#tb"/></svg><span>Occupency</span></div>
      <div class="node"><svg class="ar" viewBox="0 0 7 12"><use href="#ar"/></svg><svg class="nic" viewBox="0 0 13 13"><use href="#tc"/></svg><span>Parameter</span></div>
      <div class="node"><svg class="ar" viewBox="0 0 7 12"><use href="#ar"/></svg><svg class="nic" viewBox="0 0 12 12"><use href="#tb"/></svg><span>room</span></div>
      <div class="node"><svg class="ar open" viewBox="0 0 12 7"><path d="M.7.700 6 6l5.300-5.300" fill="none" stroke="#8a8886"/></svg><svg class="nic" viewBox="0 0 13 13"><use href="#tc"/></svg><span>table</span></div>
      <div class="leaf"><i class="cb"></i><svg class="lic" viewBox="0 0 12 14"><use href="#cl"/></svg><span>ADR</span></div>
      <div class="leaf"><i class="cb"></i><svg class="lic" viewBox="0 0 12 14"><use href="#cl"/></svg><span>avg_Rev_per_r...</span></div>
      <div class="leaf"><i class="cb"></i><svg class="lic" viewBox="0 0 12 14"><use href="#cl"/></svg><span>cancellation</span></div>
      <div class="leaf"><i class="cb"></i><svg class="lic" viewBox="0 0 12 14"><use href="#cl"/></svg><span>cancellation %</span></div>
      <div class="leaf"><i class="cb"></i><svg class="lic" viewBox="0 0 12 14"><use href="#cl"/></svg><span>capacity</span></div>
      <div class="leaf"><i class="cb"></i><svg class="lic" viewBox="0 0 12 14"><use href="#cl"/></svg><span>check_out</span></div>
      <div class="leaf"><i class="cb"></i><svg class="lic" viewBox="0 0 12 14"><use href="#cl"/></svg><span>checked_out %</span></div>
      <div class="leaf"><i class="cb"></i><svg class="lic" viewBox="0 0 12 14"><use href="#cl"/></svg><span>current_Reven...</span></div>
      <div class="leaf"><i class="cb"></i><svg class="lic" viewBox="0 0 12 14"><use href="#cl"/></svg><span>no_show</span></div>
      <div class="leaf"><i class="cb"></i><svg class="lic" viewBox="0 0 12 14"><use href="#cl"/></svg><span>NO_show %</span></div>
      <div class="leaf"><i class="cb"></i><svg class="lic" viewBox="0 0 12 14"><use href="#cl"/></svg><span>Occupancy %</span></div>
      <div class="tree-scroll"></div>
    </div>
  </aside>
</main>

<footer class="status">
  <span class="page-no">Page 2 of 7</span>
  <div class="zoom">
    <b class="zm">-</b>
    <div class="slider"><i class="tick"></i><i class="thumb"></i></div>
    <b class="zp">+</b>
    <span class="pct">71%</span>
    <svg class="fit" viewBox="0 0 16 13"><rect x=".5" y=".5" width="15" height="12" fill="none" stroke="#6b6b80"/><path d="M3 5V3h2.500M13 5V3h-2.500M3 8v2h2.500M13 8v2h-2.500" fill="none" stroke="#3b3a39"/></svg>
  </div>
</footer>

<div class="taskbar">
  <svg class="win" viewBox="0 0 16 16"><path d="M0 2.300 6.500 1.400v6.200H0zM7.400 1.300 16 0v7.600H7.400zM0 8.400h6.500v6.200L0 13.700zM7.400 8.400H16V16l-8.600-1.200z" fill="#111"/></svg>
  <div class="task-search"><svg class="ic16" viewBox="0 0 16 16"><circle cx="9.800" cy="6.200" r="5.300" fill="none" stroke="#111" stroke-width="1.200"/><path d="M6 10 .8 15.200" stroke="#111" stroke-width="1.300"/></svg><span>Search</span></div>
  <div class="task-icons">
    <div class="ti"><svg viewBox="0 0 16 16"><circle cx="8" cy="8" r="6.500" fill="none" stroke="#111" stroke-width="2"/></svg></div>
    <div class="ti"><svg viewBox="0 0 16 16"><path d="M1 .5h11M1 15.500h11M1 4h11v8H1zM15 1v3M15 6v4M15 12v3" fill="none" stroke="#111" stroke-width="1.200"/></svg></div>
    <div class="ti"><svg viewBox="0 0 16 16"><path d="M0 2h6l1.500 2H16v11H0z" fill="#f3c12f"/><rect y="6" width="16" height="9" fill="#f7d774"/><path d="M5 15v-5h6v5H9v-3H7v3z" fill="#1b7ac4"/></svg></div>
    <div class="ti"><svg viewBox="0 0 16 16"><circle cx="8" cy="8" r="7.500" fill="#29a8e0"/><text x="8" y="12" class="tS">S</text></svg></div>
    <div class="ti"><svg viewBox="0 0 16 16"><rect y="3" width="16" height="13" rx="2" fill="#1a4e8c"/><path d="M5 3V1h6v2" fill="none" stroke="#d13438" stroke-width="1.500"/><path d="M5 6h2.700v2.700H5z" fill="#f25022"/><path d="M8.300 6H11v2.700H8.300z" fill="#7fba00"/><path d="M5 9.300h2.700V12H5z" fill="#00a4ef"/><path d="M8.300 9.300H11V12H8.300z" fill="#ffb900"/></svg></div>
    <div class="ti"><svg viewBox="0 0 16 16"><defs><linearGradient id="ig" x1="0" y1="1" x2="1" y2="0"><stop offset="0" stop-color="#f9a03f"/><stop offset=".5" stop-color="#e1306c"/><stop offset="1" stop-color="#7b3fe4"/></linearGradient></defs><rect x=".5" y=".5" width="15" height="15" rx="3.500" fill="url(#ig)"/><rect x="3" y="3" width="10" height="10" rx="3" fill="none" stroke="#fff" stroke-width="1.300"/><circle cx="8" cy="8" r="2.500" fill="none" stroke="#fff" stroke-width="1.300"/></svg></div>
    <div class="ti"><svg viewBox="0 0 16 16"><circle cx="8" cy="8" r="8" fill="#0f6cbd"/><path d="M2 6c2-5 12-6 14 2 0 2-2 3-4 3-3 0-2-3-1-3-2-2-8-2-9-2z" fill="#3ed18f"/><path d="M4 9c0 4 5 7 10 4-4 0-6-2-6-5-2-1-3 0-4 1z" fill="#8fd8f7"/></svg></div>
    <div class="ti"><svg viewBox="0 0 16 16"><circle cx="8" cy="8" r="8" fill="#e33b2e"/><path d="M8 16A8 8 0 0 1 1 4l4 7z" fill="#2ea24a"/><path d="M8 4h7a8 8 0 0 1-6 12l3-6z" fill="#fbc02d"/><circle cx="8" cy="8" r="3.600" fill="#2a7de1" stroke="#fff" stroke-width="1"/></svg></div>
    <div class="ti"><svg viewBox="0 0 16 16"><rect width="16" height="16" fill="#8bb41f"/><circle cx="8" cy="8" r="6" fill="#e33b2e"/><text x="8" y="11" class="tW">W</text></svg></div>
    <div class="ti act"><svg viewBox="0 0 16 16"><circle cx="8" cy="8" r="8" fill="#1ed760"/><path d="M3.500 5.500c3-1 6-1 9 .8M4 8c2.500-.8 5-.6 7.500.8M4.500 10.500c2-.6 4-.5 6 .6" fill="none" stroke="#111" stroke-width="1.300"/></svg></div>
    <div class="ti act cur"><svg viewBox="0 0 16 16"><rect x="0" y="9" width="5" height="7" fill="#f6e27f"/><rect x="4.500" y="5" width="5" height="11" fill="#f2c811"/><rect x="9" y="0" width="5.500" height="16" fill="#e0a800"/></svg></div>
  </div>
  <div class="tray">
    <svg class="cloud" viewBox="0 0 24 16"><path d="M6 16a5.500 5.500 0 0 1-1-11C6.500 1.500 9 0 12 0c3.500 0 6 2 7 5.500A5.300 5.300 0 0 1 19 16z" fill="#a9cdf0"/></svg>
    <svg class="t-ch" viewBox="0 0 12 7"><path d="M.7 6.300 6 1l5.300 5.300" fill="none" stroke="#111" stroke-width="1.100"/></svg>
    <svg class="t-pl" viewBox="0 0 16 16"><path d="M1 5H3L5 7H7.500L6 1H8L11 7H14A1.500 1.500 0 0 1 14 10H11L8 15H6L7.500 10H5L3 12H1L2 8.500z" fill="#fff" stroke="#111"/></svg>
    <svg class="t-od" viewBox="0 0 16 14"><path d="M4 11a3.500 3.500 0 0 1-.5-7C4.500 1.500 7 0 9 1s3 2 3 3" fill="#555" stroke="#333"/><circle cx="11" cy="9" r="4.500" fill="#1a73c2"/><path d="M8.500 8.500c1-2 4-2 5 0M13.500 9.500c-1 2-4 2-5 0" fill="none" stroke="#fff"/></svg>
    <svg class="t-bt" viewBox="0 0 16 14"><rect x="4.500" y="4.500" width="11" height="7" fill="#fff" stroke="#111"/><rect x="6" y="6" width="8" height="4" fill="#111"/><path d="M1 1v2M4 1v2M0 3h5v2H0zM2.500 5v3h2" fill="none" stroke="#111"/></svg>
    <span class="eng">ENG</span>
    <span class="clock">12:54</span>
    <svg class="t-nt" viewBox="0 0 16 16"><path d="M0 0h16v11h-6l-3 4v-4H0z" fill="#111"/><path d="M3 3h10M3 5.500h10M3 8h7" stroke="#fff"/></svg>
  </div>
</div>
</div>
</body>
</html>
```
FILE: styles.css
```css
*{box-sizing:border-box;margin:0;padding:0}
html,body{width:1366px;height:768px;overflow:hidden}
body{font-family:"Open Sans","Noto Sans",sans-serif;background:#f3f2f1;color:#252423}
.defs{position:absolute}
.app{display:flex;flex-direction:column;width:1366px;height:768px}
svg{display:block;flex:none}
i,em{font-style:normal}
.ic14{width:14px;height:15px}
.ic15{width:15px;height:15px}
.ic16{width:16px;height:16px}
.ic18{width:18px;height:18px}
.ic20{width:20px;height:18px}
.ic30{width:30px;height:30px}
.cop{width:32px;height:30px}

/* title bar */
.titlebar{height:34px;flex:none;background:#3b3a39;display:flex;align-items:center;position:relative;color:#fff}
.tb-left{display:flex;align-items:center;padding-left:17px;width:550px}
.tb-left .ic15:nth-child(2){margin-left:16px}
.tb-left .ic15:nth-child(3){margin-left:15px}
.doc-title{font-size:11.500px;margin-left:25px;white-space:nowrap;width:191px}
.dot{font-weight:400;margin:0 1px}
.caret{width:9px;height:5px}
.global-search{width:400px;height:24px;background:#d2d2d0;border-radius:2px;display:flex;align-items:center;padding-left:17px;color:#2c6b60;font-size:13px}
.global-search span{margin-left:12px}
.tb-right{flex:1;display:flex;align-items:center;padding-left:202px}
.signin{font-size:12px;width:47px;white-space:nowrap}
.avatar{width:20px;height:20px}
.win-btn{width:11px;height:11px;margin-left:33px}
.win-btn.first{margin-left:32px}

/* menu */
.menu{height:36px;flex:none;background:#fafafa;display:grid;grid-template-columns:60px 74px 62px 95px 56px 92px 56px;justify-content:start;padding-left:3px;font-size:13.200px;align-items:center;position:relative;color:#323130}
.menu>span{text-align:center;height:36px;line-height:33px;position:relative}
.menu>span.active{font-weight:600;color:#252423}
.menu>span.active::after{content:"";position:absolute;left:18px;right:18px;top:27px;height:3px;background:#117865}
.share{position:absolute;left:1276px;top:4px;width:84px;height:24px;background:#117865;border-radius:3px;display:flex;align-items:center;color:#fff;font-size:12px;padding-left:7px}
.share span{margin-left:9px;width:35px}
.cv10{width:10px;height:6px}

/* ribbon */
.ribbon{height:90px;flex:none;background:#fafafa;display:flex;position:relative;box-shadow:0 1px 3px rgba(0,0,0,.18);z-index:3}
.grp{height:88px;border-right:1px solid #d2d0ce;display:flex;flex-direction:column;flex:none;position:relative}
.grp-name{position:absolute;left:0;right:0;top:77px;text-align:center;font-size:9.800px;color:#605e5c;line-height:14px}
.btns{display:flex;padding-top:7px}
.btn{display:flex;flex-direction:column;align-items:center;font-size:11.300px;line-height:16px;color:#484644;text-align:center;white-space:nowrap;flex:none}
.btn span{margin-top:3px}
.btn.off{color:#c8c6c4}
.ic30.wide{width:31px}
.dn{display:inline-block;width:5px;height:5px;border-right:1px solid #484644;border-bottom:1px solid #484644;transform:rotate(45deg);margin:0 0 3px 4px}
.dn.solo{border-color:#c8c6c4;margin:0}
.w36{width:36px}.w40{width:40px}.w42{width:42px}.w44{width:44px}.w48{width:48px}.w50{width:50px}.w54{width:54px}.w58{width:58px}.w59{width:59px}.w60{width:60px}.w68{width:68px}.w73{width:73px}
.g-clip{width:161px}
.g-data{width:370px;padding-left:4px}
.g-query{width:117px;padding-left:6px}
.g-insert{width:147px;padding-left:7px}
.g-calc{width:115px;padding-left:8px}
.g-sens{width:74px}
.g-share{width:60px}
.g-copilot{width:59px}
.clip-body{display:flex;padding:7px 0 0 11px}
.paste{width:34px;color:#c8c6c4;font-size:11.300px;text-align:center}
.paste span{display:block;margin-top:3px;line-height:16px}
.clip-list{margin-left:10px;margin-top:-7px;color:#c8c6c4;font-size:11.300px}
.clip-list div{display:flex;align-items:center;height:24px;white-space:nowrap}
.clip-list span{margin-left:3px}
.collapse{position:absolute;left:1353px;top:78px;width:9px;height:6px}

/* main */
.main{height:553px;flex:none;display:flex;position:relative}
.rail{width:41px;flex:none;background:#f3f2f1;border-right:1px solid #e1dfdd;display:flex;flex-direction:column;position:relative}
.rail-item{height:40px;display:flex;align-items:center;justify-content:center}
.rail-item.sel{border-left:3px solid #117865;padding-right:3px}
.center{width:964px;flex:none;display:flex;flex-direction:column}
.stage{height:518px;flex:none;display:flex;background:linear-gradient(90deg,#fafafa,#f7f7f7);padding:10px 0 0 11px;position:relative}
.canvas{width:908px;height:508px;background:#0d0d0d;position:relative;overflow:hidden;flex:none}
.filters{position:absolute;left:930px;top:0;width:34px;height:518px;background:#fff;border-left:1px solid #a19f9d;display:flex;flex-direction:column;align-items:center}
.filters .dbl{width:14px;height:13px;margin-top:13px}
.filters .funnel{width:13px;height:13px;margin-top:15px}
.filters-label{writing-mode:vertical-rl;font-size:14px;font-weight:600;margin-top:3px;letter-spacing:.4px;color:#252423}

/* canvas content */
.title-plate{position:absolute;left:15px;top:7px;width:284px;height:32px;border:1px solid #1c1c1c;border-radius:16px;background:#0a0a0a}
.logo{position:absolute;left:18px;top:3px;width:33px;height:33px;background:#fff;padding:4px}
.page-title{position:absolute;left:61px;top:7px;font:700 25.800px/34px Roboto,sans-serif;color:#fff;white-space:nowrap}
.navbar{position:absolute;left:320px;top:7px;width:581px;height:43px;border:1px solid #8a5f78;border-radius:20px;background:#0d0d0d;box-shadow:2px 3px 10px rgba(194,123,160,.45);display:flex;gap:7.500px;padding:6px 0 0 7px}
.nav{width:74px;height:29px;flex:none;border-radius:14px;background:#000;color:#fff;font-size:14px;line-height:30px;text-align:center;white-space:nowrap;overflow:hidden}
.nav.cur{background:#1b242c;font-size:8.500px;font-weight:700}

.kpi{position:absolute;border:1.500px solid #9c6a86;border-radius:18px;overflow:hidden;background:#000;box-shadow:3px 4px 10px rgba(194,123,160,.4);color:#fff;text-align:center}
.kpi-head{height:27px;background:#4d0025;border-bottom:1.500px solid #b0718f;font:500 15.500px/30px Roboto,sans-serif;letter-spacing:.5px}
.kpi-val{font:500 19.500px/34px Roboto,sans-serif}
.k-adr{left:295px;top:60px;width:186px;height:67px}
.k-rel{left:514px;top:59px;width:179px;height:63px}
.k-rel .kpi-head{height:28px;line-height:32px}
.k-rel .kpi-val{line-height:29px}
.k-par{left:714px;top:58px;width:179px;height:64px}
.k-par .kpi-head{height:28px;line-height:32px}
.k-par .kpi-val{line-height:29px}

.slicer{position:absolute;left:1px;width:148px;border:1.500px solid #8e5c7a;border-radius:20px;background:#000;overflow:hidden;box-shadow:3px 4px 10px rgba(194,123,160,.42);color:#fff}
.sl-head{height:30px;background:#4d0025;border-bottom:2px solid #a8688a;font:500 18px/36px Roboto,sans-serif;padding-left:9px;letter-spacing:.3px;white-space:nowrap}
.dd{margin:7px 0 0 12px;width:121px;height:24px;border:2px solid #8f8f8f;background:#000;display:flex;align-items:center;justify-content:space-between;padding:0 4px 0 3px;font-size:11.800px}
.dd svg{width:12px;height:7px}
.s-cat{top:98px;height:72px}
.s-week{top:180px;height:65px}
.s-day{top:256px;height:72px}
.s-room{top:345px;height:63px;width:156px}
.s-room .dd{width:129px}
.s-month{top:429px;height:71px}

.frame{position:absolute;background:#2b2b2b;border:2px solid #c27ba0;border-radius:8px}
.f-main{left:168px;top:135px;width:513px;height:376px}
.f-wow{left:694px;top:127px;width:195px;height:317px}
.grid-clip{position:absolute;left:7px;top:6px;width:491px;height:353px;overflow:hidden;background:#eee;font-size:12.300px;color:#323130}
.r{display:grid;grid-template-columns:79.500px 71.500px 161.500px 71px 75.500px 102px;height:19.930px;background:#eee;border-bottom:1px solid #c8a4bb;line-height:21px;white-space:nowrap}
.r:nth-child(even){background:#e7cbdb;border-bottom-color:#c79ab6}
.r>div{padding:0 3px 0 4px;border-right:1px solid #c4c0c2;overflow:hidden}
.r>div.n{text-align:right}
.r>div.x{padding-left:26px}
.r>div.x2{padding-left:12px}
.r.hd{height:29px;background:#c27ba0;color:#5a3350;font-size:13px;line-height:23px;border-bottom:none}
.r.hd>div{border-right:1px solid #a96a8c;position:relative}
.r.stub{height:5px;background:#eee}
.r.tot{height:20px;background:#c27ba0;font-weight:700;color:#3b2030;font-size:12.800px;line-height:23px;border-bottom:none}
.r.tot>div{border-right:1px solid #a96a8c}
.sort{position:absolute;width:9px;height:5px;left:4px;top:22px}
.vbar{position:absolute;left:498px;top:6px;width:6px;height:353px;background:#4a4a4a;border-radius:3px}
.vbar i{position:absolute;left:0;right:0;bottom:0;height:18px;background:#808080;border-radius:0 0 3px 3px}
.hbar{position:absolute;left:7px;top:359px;width:491px;height:6px;background:#555;border-radius:3px}
.hbar i{position:absolute;right:0;top:0;bottom:0;width:63px;background:#8a8a8a;border-radius:0 3px 3px 0}
.wow-grid{position:absolute;left:7px;top:6px;width:147px;font-size:12.300px;color:#323130}
.w{display:grid;grid-template-columns:89.500px 57.500px;height:19.900px;background:#eee;border-bottom:1px solid #c8a4bb;line-height:19px;white-space:nowrap}
.w:nth-child(even){background:#e7cbdb;border-bottom-color:#c79ab6}
.w>div{padding:0 4px;border-right:1px solid #c4c0c2}
.w>div.n{text-align:right}
.w.hd{height:31px;background:#c27ba0;color:#5a3350;font-size:13px;line-height:25px;border-bottom:1px solid #b5568c}
.w.hd>div{position:relative;border-right:1px solid #a96a8c}
.sort.up{left:4px;top:22px}

/* page bar */
.pagebar{height:35px;flex:none;background:#f3f2f1;display:flex;position:relative;font-size:11.600px;color:#484644}
.view-btn{height:35px;display:flex;justify-content:center;position:relative}
.view-btn.on{width:44px;padding-top:8px;padding-right:2px}
.view-btn.on::after{content:"";position:absolute;left:10px;width:24px;height:2.500px;top:28px;background:#117865;border-radius:1px}
.desk{width:19px;height:14px}
.view-btn.phone{width:42px;padding-top:5px;padding-right:1px}
.mob{width:13px;height:20px}
.pager{width:41px;display:flex;gap:17px;align-items:center;padding-left:6px;height:35px}
.pager svg{width:5px;height:8px}
.ptab{background:#fff;height:35px;border-right:1px solid #d2d0ce;text-align:center;line-height:38px;flex:none}
.t1{width:97px;border-left:1px solid #d2d0ce;margin-left:1px}.t2{width:81px}.t3{width:100px}.t4{width:105px}.t5{width:66px}.t6{width:70px}.t7{width:55px;border-right:none}
.ptab.sel{font-weight:600;color:#252423;border-bottom:4px solid #117865}
.padd{width:39px;height:35px;background:#117865;display:flex;align-items:center;justify-content:center;padding-bottom:2px}
.padd svg{width:11px;height:11px}

/* panes */
.viz,.data{background:#f3f2f1;border-left:1px solid #e1dfdd;flex:none;height:553px;position:relative;border-bottom:1px solid #e1dfdd}
.viz{width:181px}
.data{flex:1}
.pane-head{height:38px;display:flex;align-items:center;justify-content:space-between;position:relative}
.pane-head h2{font-size:14.800px;font-weight:600;color:#323130;line-height:38px;margin-left:7px}
.viz .pane-head svg{width:14px;height:13px;margin-right:8px}
.data .pane-head svg{width:14px;height:13px;margin-right:7px}
.build-label{font-size:11.300px;font-weight:600;line-height:14px;padding-left:7px;color:#323130}
.build-tabs{display:flex;margin:5px 0 0 7px;height:32px;align-items:center}
.tile{width:32px;height:32px;background:#d2d0ce;border-radius:2px;padding:4px}
.tile svg{width:24px;height:24px}
.fmt{width:24px;height:26px;margin-left:38px}
.divider{height:1px;background:#8a8886;margin-top:12px;position:relative}
.notch{position:absolute;left:14px;top:-8px;width:18px;height:9px}
.viz-grid{display:grid;grid-template-columns:repeat(6,28px);grid-auto-rows:28px;padding:6px 0 0 5px;place-items:center;height:207px}
.viz-grid svg{width:18px;height:18px}
.k{fill:none;stroke:#3b3a39}
.k2{fill:none;stroke:#605e5c;stroke-width:1.500}
.bl{fill:#71b2e8;stroke:#106ebe}
.bl2{fill:#5ea3e0;stroke:#106ebe}
.gr{fill:#b3b0ad}
.wh{fill:#fff;stroke:#605e5c}
.lb{fill:none;stroke:#2b88d8}
.more{font-size:14px;letter-spacing:2px;color:#3b3a39;line-height:14px;margin-top:-6px}
.xl{font:700 11px "Open Sans",sans-serif;fill:#fff;text-anchor:middle}
.tA{font:400 20px "Open Sans",sans-serif;fill:#2b88d8;text-anchor:middle}
.dax{font:400 6.500px "Open Sans",sans-serif;fill:#8a8886}
.t123{font:400 7.500px "Open Sans",sans-serif;fill:#1a73c2;text-anchor:middle}
.tR{font:700 16px/20px "Open Sans",sans-serif;color:#2b88d8}
.tPy{font:700 17px/20px "Open Sans",sans-serif;color:#2b88d8}
.tS{font:700 11px "Open Sans",sans-serif;fill:#fff;text-anchor:middle}
.tW{font:700 8px "Open Sans",sans-serif;fill:#fff;text-anchor:middle}

.wells{position:absolute;left:0;top:309px;width:180px;height:236px;border-top:1px solid #e1dfdd;overflow:hidden;font-size:11.400px;color:#323130}
.well-label{height:30px;line-height:32px;padding-left:11px}
.dropzone{width:170px;height:27px;margin-left:3px;background:#fff;border:1px dashed #c8c6c4;line-height:25px;padding-left:10px;color:#252423}
.drill{margin-top:9px;height:20px;line-height:20px;padding-left:11px;font-weight:600;color:#484644}
.opt{height:20px;display:flex;align-items:center;justify-content:space-between;padding:0 22px 0 11px}
.o1{margin-top:4px}.o2{margin-top:7px}
.toggle{width:32px;height:16px;border:1px solid #605e5c;border-radius:8px;display:flex;align-items:center;font-size:8.500px;padding:0 2px;gap:1px;color:#605e5c;background:#fff}
.toggle i{width:8px;height:8px;border-radius:50%;background:#605e5c;flex:none}
.toggle.on{background:#c8c6c4;border-color:#c8c6c4;justify-content:space-between;color:#a19f9d}
.toggle.on i{background:#fff}
.chips{margin:9px 0 0 3px;width:170px;border:1px dashed #c8c6c4;padding:1px 2px;background:#f3f2f1;height:120px}
.chip{height:43px;background:#faf9f8;border:1px solid #d2d0ce;border-radius:2px;margin-bottom:2px;padding:0 8px;position:relative}
.chip-top{height:22px;display:flex;align-items:center}
.cic{width:9px;height:11px;margin-left:3px}
.chip-top span{margin-left:7px}
.xx{position:absolute;left:126px;top:7px;width:9px;height:9px}
.lock{position:absolute;left:146px;top:6px;width:10px;height:12px}
.chip-sub{line-height:18px}
.well-scroll{position:absolute;left:174px;top:2px;width:5px;height:218px;background:#c8c6c4;border-radius:3px}

.data-search{margin:8px 0 0 4px;width:171px;height:22px;background:#fff;border:1px solid #c8c6c4;border-radius:3px;display:flex;align-items:center;padding-left:12px;font-size:12.500px;color:#605e5c;box-shadow:0 1px 1px rgba(0,0,0,.15)}
.data-search span{margin-left:7px}
.tree{position:absolute;left:0;top:78px;width:179px;height:467px;overflow:hidden;font-size:11.400px;color:#484644}
.node{height:24px;display:flex;align-items:center;padding-left:14px;position:relative}
.ar{width:7px;height:12px}
.ar.open{width:11px;height:6px;margin-left:-2px;margin-right:-2px}
.nic{width:12px;height:12px;margin-left:7px}
.node span{margin-left:6px}
.leaf{height:24px;display:flex;align-items:center;padding-left:43px}
.cb{width:12px;height:12px;border:1px solid #8a8886;border-radius:2px;background:#faf9f8;flex:none}
.lic{width:12px;height:14px;margin-left:8px}
.leaf span{margin-left:6px;white-space:nowrap}
.tree-scroll{position:absolute;left:168px;top:-1px;width:8px;height:314px;background:#c8c6c4}

/* status */
.status{height:24px;flex:none;background:#f3f2f1;display:flex;align-items:center;justify-content:space-between;font-size:11.300px;color:#605e5c;padding-left:4px}
.page-no{line-height:26px}
.zoom{display:flex;align-items:center;position:relative;width:216px;height:24px}
.zm,.zp{font-weight:400;font-size:13px;position:absolute;top:2px}
.zm{left:6px;font-weight:700}
.zp{left:117px}
.slider{position:absolute;left:13px;top:11px;width:100px;height:1px;background:#605e5c}
.tick{position:absolute;left:50px;top:-2px;width:1px;height:5px;background:#605e5c}
.thumb{position:absolute;left:33px;top:-5px;width:4px;height:11px;background:#605e5c}
.pct{position:absolute;left:140px;top:3px;font-size:12px}
.fit{position:absolute;left:182px;top:5px;width:16px;height:13px}

/* taskbar */
.taskbar{height:31px;flex:none;border-top:1px solid #111;background:linear-gradient(90deg,#d6d6d6,#dedede 55%,#e6dcd6 62%,#dedcdc 75%,#dcdcdc);display:flex;align-items:center;position:relative}
.win{width:16px;height:16px;margin-left:10px}
.task-search{margin-left:11px;width:256px;height:29px;margin-top:1px;background:#fff;display:flex;align-items:center;padding-left:11px;font-size:14px;color:#323130;align-self:flex-start}
.task-search span{margin-left:12px}
.task-icons{display:flex;height:30px}
.ti{width:37px;height:30px;display:flex;align-items:center;justify-content:center;position:relative}
.ti svg{width:16px;height:16px}
.ti.act::after{content:"";position:absolute;left:4px;right:4px;bottom:0;height:2px;background:#8bb41f}
.ti.cur{background:#f0f0f0}
.ti.cur::after{left:0;right:0}
.tray{position:absolute;left:0;top:0;width:1366px;height:30px;pointer-events:none;font-size:12px;color:#252423}
.tray>*{position:absolute}
.cloud{left:1104px;top:6px;width:24px;height:16px}
.t-ch{left:1148px;top:12px;width:12px;height:7px}
.t-pl{left:1170px;top:7px;width:16px;height:16px}
.t-od{left:1194px;top:9px;width:16px;height:14px}
.t-bt{left:1218px;top:8px;width:16px;height:14px}
.eng{left:1244px;top:6px;line-height:18px}
.clock{left:1281px;top:6px;line-height:18px}
.t-nt{left:1325px;top:6px;width:16px;height:16px}
```
